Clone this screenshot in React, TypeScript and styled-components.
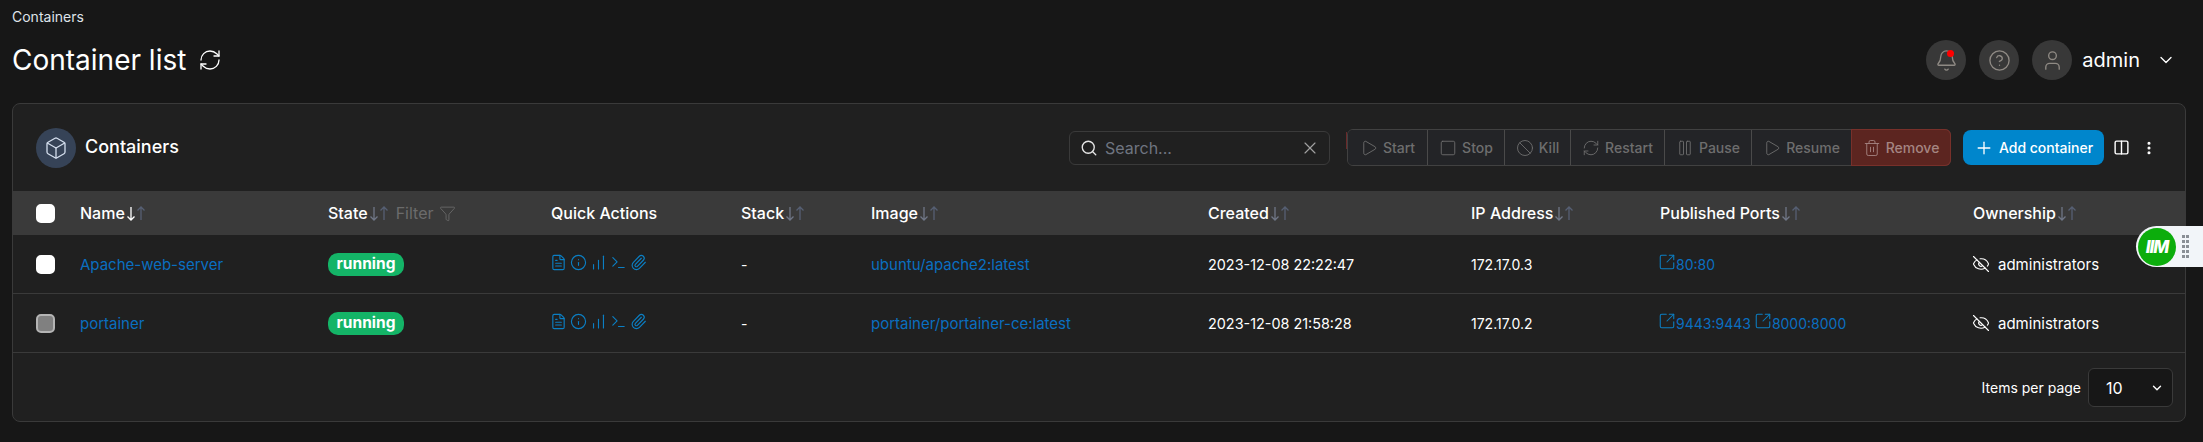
import React from 'react';
import styled, { createGlobalStyle } from 'styled-components';
import {
    Ban, Bell, Box, ChartNoAxesColumnIncreasing, ChevronDown, CircleHelp, Columns2,
    EllipsisVertical, EyeOff, FileText, Filter, Info, Paperclip, Pause, Play, Plus, RefreshCw, Search,
    Square, SquareArrowOutUpRight, Terminal, Trash2, User, X,
} from 'lucide-react';

const COLUMNS = '67px 248px 223px 190px 130px 337px 263px 189px 313px 212px';
const BLUE = '#0a6fc0';
const BORDER = '#3a3a3a';

const actions = [
    { label: 'Start', icon: Play, width: 80 },
    { label: 'Stop', icon: Square, width: 77 },
    { label: 'Kill', icon: Ban, width: 66 },
    { label: 'Restart', icon: RefreshCw, width: 94 },
    { label: 'Pause', icon: Pause, width: 87 },
    { label: 'Resume', icon: Play, width: 100 },
    { label: 'Remove', icon: Trash2, width: 98, danger: true },
];

const containers = [
    {
        name: 'Apache-web-server',
        image: 'ubuntu/apache2:latest',
        created: '2023-12-08 22:22:47',
        ip: '172.17.0.3',
        ports: ['80:80'],
        checked: true,
    },
    {
        name: 'portainer',
        image: 'portainer/portainer-ce:latest',
        created: '2023-12-08 21:58:28',
        ip: '172.17.0.2',
        ports: ['9443:9443', '8000:8000'],
        checked: false,
    },
];

const Sort = ({ active }: { active?: boolean }) => (
    <SortIcons $active={active}>
        <svg width="10" height="15" viewBox="0 0 10 15" fill="none" stroke="currentColor" strokeWidth="1.3">
            <path d="M5 1v13M1.5 10.5 5 14l3.5-3.5" />
        </svg>
        <svg width="10" height="15" viewBox="0 0 10 15" fill="none" stroke="currentColor" strokeWidth="1.3">
            <path d="M5 14V1M1.5 4.5 5 1l3.5 3.5" />
        </svg>
    </SortIcons>
);

const App = (): JSX.Element => {
    return (
        <Page>
            <GlobalStyle />
            <Breadcrumb>Containers</Breadcrumb>
            <TopBar>
                <TitleGroup>
                    <PageTitle>Container list</PageTitle>
                    <RefreshCw size={24} color="#fff" strokeWidth={1.3} />
                </TitleGroup>
                <UserMenu>
                    <RoundButton>
                        <Bell size={23} strokeWidth={1.4} />
                        <RedDot />
                    </RoundButton>
                    <RoundButton>
                        <CircleHelp size={23} strokeWidth={1.4} />
                    </RoundButton>
                    <RoundButton>
                        <User size={23} strokeWidth={1.4} />
                    </RoundButton>
                    <UserName>admin</UserName>
                    <ChevronDown size={20} color="#fff" strokeWidth={1.6} />
                </UserMenu>
            </TopBar>
            <Card>
                <CardHeader>
                    <CardIcon><Box size={24} strokeWidth={1.3} /></CardIcon>
                    <CardTitle>Containers</CardTitle>
                    <Toolbar>
                        <SearchBox>
                            <Search size={18} color="#e6e6e6" strokeWidth={1.8} />
                            <SearchText>Search...</SearchText>
                            <X size={20} color="#a0a0a0" strokeWidth={1.4} />
                        </SearchBox>
                        <ActionGroup>
                            {actions.map((action) => (
                                <ActionButton key={action.label} $width={action.width} $danger={action.danger}>
                                    <action.icon size={18} strokeWidth={1.2} />
                                    {action.label}
                                </ActionButton>
                            ))}
                        </ActionGroup>
                        <AddButton>
                            <Plus size={20} strokeWidth={1.6} />
                            Add container
                        </AddButton>
                        <ViewIcons>
                            <Columns2 size={17} strokeWidth={2} />
                            <EllipsisVertical size={16} strokeWidth={2.6} />
                        </ViewIcons>
                    </Toolbar>
                </CardHeader>
                <HeadRow>
                    <CheckCell><Checkbox $checked /></CheckCell>
                    <HeadCell>Name<Sort active /></HeadCell>
                    <HeadCell>
                        State<Sort />
                        <FilterLabel>Filter <Filter size={17} strokeWidth={1.2} /></FilterLabel>
                    </HeadCell>
                    <HeadCell>Quick Actions</HeadCell>
                    <HeadCell>Stack<Sort /></HeadCell>
                    <HeadCell>Image<Sort /></HeadCell>
                    <HeadCell>Created<Sort /></HeadCell>
                    <HeadCell>IP Address<Sort /></HeadCell>
                    <HeadCell>Published Ports<Sort /></HeadCell>
                    <HeadCell>Ownership<Sort /></HeadCell>
                </HeadRow>
                {containers.map((container) => (
                    <BodyRow key={container.name}>
                        <CheckCell><Checkbox $checked={container.checked} /></CheckCell>
                        <BodyCell><BlueText>{container.name}</BlueText></BodyCell>
                        <BodyCell><Badge>running</Badge></BodyCell>
                        <BodyCell>
                            <QuickIcons>
                                <FileText size={17} strokeWidth={1.6} />
                                <Info size={17} strokeWidth={1.6} />
                                <ChartNoAxesColumnIncreasing size={17} strokeWidth={1.6} />
                                <Terminal size={17} strokeWidth={1.6} />
                                <Paperclip size={17} strokeWidth={1.6} />
                            </QuickIcons>
                        </BodyCell>
                        <BodyCell>-</BodyCell>
                        <BodyCell><BlueText>{container.image}</BlueText></BodyCell>
                        <BodyCell><Created>{container.created}</Created></BodyCell>
                        <BodyCell>{container.ip}</BodyCell>
                        <BodyCell>
                            {container.ports.map((port) => (
                                <PortLink key={port}>
                                    <SquareArrowOutUpRight size={18} strokeWidth={1.4} />
                                    {port}
                                </PortLink>
                            ))}
                        </BodyCell>
                        <BodyCell>
                            <Owner><EyeOff size={18} strokeWidth={1.5} />administrators</Owner>
                        </BodyCell>
                    </BodyRow>
                ))}
                <CardFooter>
                    <PerPage>Items per page</PerPage>
                    <PageSelect>
                        10
                        <ChevronDown size={14} strokeWidth={2.4} />
                    </PageSelect>
                </CardFooter>
            </Card>
            <Widget>
                <WidgetLogo>IIM</WidgetLogo>
                <DragDots>
                    {Array.from({ length: 10 }).map((_, i) => <Dot key={i} />)}
                </DragDots>
            </Widget>
        </Page>
    );
};

const GlobalStyle = createGlobalStyle`
    html, body {
        margin: 0;
        background: #171717;
        font-family: Inter, "Liberation Sans", sans-serif;
        font-size: 14px;
        color: #fff;
    }
`;

const Page = styled.div`
    width: 2203px;
    height: 442px;
    box-sizing: border-box;
    padding: 0 17px 0 12px;
    overflow: hidden;
    position: relative;
`;

const Breadcrumb = styled.div`
    height: 34px;
    line-height: 34px;
    font-size: 14px;
    color: #dfe3ea;
`;

const TopBar = styled.div`
    height: 69px;
    display: flex;
    justify-content: space-between;
    align-items: flex-start;
`;

const TitleGroup = styled.div`
    display: flex;
    align-items: center;
    gap: 12px;
    height: 52px;
`;

const PageTitle = styled.h1`
    margin: 0;
    font-size: 28px;
    font-weight: 400;
`;

const UserMenu = styled.div`
    display: flex;
    align-items: center;
    height: 52px;
    padding: 0 10px 0 0;
`;

const RoundButton = styled.div`
    position: relative;
    width: 40px;
    height: 40px;
    margin: 0 13px 0 0;
    border-radius: 50%;
    background: #383838;
    color: #8f8a84;
    display: flex;
    align-items: center;
    justify-content: center;
`;

const RedDot = styled.span`
    position: absolute;
    top: 10px;
    left: 21px;
    width: 7px;
    height: 7px;
    border-radius: 50%;
    background: #f00;
`;

const UserName = styled.span`
    font-size: 20px;
    margin: 0 16px 0 -3px;
`;

const Card = styled.div`
    height: 319px;
    box-sizing: border-box;
    background: #202020;
    border: 1px solid ${BORDER};
    border-radius: 8px;
`;

const CardHeader = styled.div`
    height: 87px;
    display: flex;
    align-items: center;
    padding: 0 12px 0 23px;
`;

const CardIcon = styled.div`
    width: 40px;
    height: 40px;
    border-radius: 50%;
    background: #364357;
    color: #d5dfee;
    display: flex;
    align-items: center;
    justify-content: center;
`;

const CardTitle = styled.h2`
    margin: -2px 0 0 9px;
    font-size: 18px;
    font-weight: 500;
`;

const Toolbar = styled.div`
    margin-left: auto;
    display: flex;
    align-items: center;
    padding-right: 16px;
`;

const SearchBox = styled.div`
    width: 261px;
    height: 34px;
    box-sizing: border-box;
    margin-right: 17px;
    padding: 0 9px 0 10px;
    border: 1px solid ${BORDER};
    border-radius: 6px;
    display: flex;
    align-items: center;
    gap: 7px;
`;

const SearchText = styled.span`
    flex: 1;
    font-size: 16px;
    color: #6f7580;
`;

const ActionGroup = styled.div`
    position: relative;
    display: flex;
    height: 35px;
    border: 1px solid #414141;
    border-radius: 6px;

    &::before {
        content: '';
        position: absolute;
        left: -2px;
        top: 2px;
        width: 1px;
        height: 17px;
        background: #6a2a2a;
    }
`;

const ActionButton = styled.div<{ $width: number; $danger?: boolean }>`
    width: ${(p) => p.$width}px;
    box-sizing: border-box;
    display: flex;
    align-items: center;
    justify-content: center;
    gap: 5px;
    font-size: 14px;
    font-weight: 500;
    color: ${(p) => (p.$danger ? '#a58582' : '#6e6e6e')};
    background: ${(p) => (p.$danger ? '#5c2520' : '#232427')};
    border-right: ${(p) => (p.$danger ? 'none' : '1px solid #4a4a4a')};
    box-shadow: ${(p) => (p.$danger ? '0 0 0 1px #78302a' : 'none')};
    border-radius: ${(p) => (p.$danger ? '0 5px 5px 0' : '0')};

    &:first-child {
        border-radius: 5px 0 0 5px;
    }
`;

const AddButton = styled.div`
    width: 141px;
    height: 35px;
    margin-left: 12px;
    border-radius: 8px;
    background: #0086cc;
    display: flex;
    align-items: center;
    justify-content: center;
    gap: 5px;
    font-weight: 500;
`;

const ViewIcons = styled.div`
    display: flex;
    align-items: center;
    gap: 11px;
    margin-left: 9px;
`;

const HeadRow = styled.div`
    display: grid;
    grid-template-columns: ${COLUMNS};
    height: 44px;
    background: #3a3a3a;
    align-items: center;
`;

const BodyRow = styled.div`
    display: grid;
    grid-template-columns: ${COLUMNS};
    height: 58px;
    align-items: center;
    border-bottom: 1px solid ${BORDER};
`;

const CheckCell = styled.div`
    padding-left: 23px;
    display: flex;
`;

const Checkbox = styled.span<{ $checked?: boolean }>`
    width: 15px;
    height: 15px;
    border-radius: 5px;
    border: 2px solid ${(p) => (p.$checked ? '#fff' : '#b4b4b4')};
    background: ${(p) => (p.$checked ? '#fff' : '#808080')};
`;

const HeadCell = styled.div`
    display: flex;
    align-items: center;
    font-size: 16px;
    font-weight: 500;
`;

const SortIcons = styled.span<{ $active?: boolean }>`
    display: inline-flex;
    margin-left: 1px;
    color: #565f73;

    svg:first-child {
        color: ${(p) => (p.$active ? '#fff' : '#6f7686')};
    }
`;

const FilterLabel = styled.span`
    display: inline-flex;
    align-items: center;
    gap: 5px;
    margin-left: 7px;
    color: #6b6b6b;
    font-weight: 400;
`;

const BodyCell = styled.div`
    display: flex;
    align-items: center;
    font-weight: 400;
`;

const BlueText = styled.span`
    font-size: 15px;
    color: ${BLUE};
`;

const Created = styled.span`
    font-size: 14.4px;
`;

const Badge = styled.span`
    width: 76px;
    height: 23px;
    border-radius: 10px;
    background: #14b467;
    font-size: 15.5px;
    font-weight: 700;
    line-height: 22px;
    text-align: center;
`;

const QuickIcons = styled.div`
    display: flex;
    align-items: center;
    gap: 3px;
    margin: -4px 0 0 -1px;
    color: #0b7fc4;
`;

const PortLink = styled.span`
    display: inline-flex;
    align-items: center;
    margin-right: 5px;
    color: ${BLUE};

    svg {
        margin: -4px 0 0 -2px;
        color: #0b7fc4;
    }
`;

const Owner = styled.span`
    display: inline-flex;
    align-items: center;
    gap: 8px;
    font-size: 15px;

    svg {
        margin-left: -1px;
    }
`;

const CardFooter = styled.div`
    height: 69px;
    display: flex;
    align-items: center;
    justify-content: flex-end;
    padding-right: 12px;
    gap: 7px;
`;

const PerPage = styled.span`
    font-size: 14px;
`;

const PageSelect = styled.div`
    width: 85px;
    height: 39px;
    box-sizing: border-box;
    padding: 0 8px 0 17px;
    border: 1px solid ${BORDER};
    border-radius: 6px;
    background: #171717;
    font-size: 16px;
    display: flex;
    align-items: center;
    justify-content: space-between;
`;

const Widget = styled.div`
    position: absolute;
    top: 226px;
    right: 0;
    width: 67px;
    height: 41px;
    display: flex;
    align-items: center;
    background: #f2f5f9;
    border-radius: 21px 0 0 21px;
`;

const WidgetLogo = styled.div`
    width: 38px;
    height: 38px;
    margin-left: 2px;
    border-radius: 50%;
    background: #0cad0c;
    color: #fff;
    font-size: 17px;
    font-weight: 800;
    font-style: italic;
    letter-spacing: -1px;
    line-height: 38px;
    text-align: center;
`;

const DragDots = styled.div`
    display: grid;
    grid-template-columns: repeat(2, 3px);
    gap: 2px 1px;
    margin-left: 6px;
`;

const Dot = styled.span`
    width: 3px;
    height: 3px;
    background: #8a8f96;
`;

export default App;
